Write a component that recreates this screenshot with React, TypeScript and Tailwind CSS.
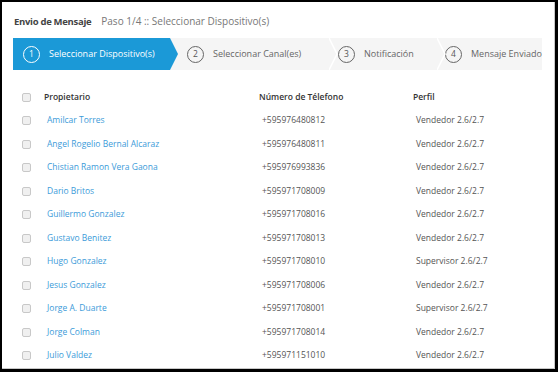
import React from "react";

const rows: [string, string, string][] = [
  ["Amilcar Torres", "+595976480812", "Vendedor 2.6/2.7"],
  ["Angel Rogelio Bernal Alcaraz", "+595976480811", "Vendedor 2.6/2.7"],
  ["Chistian Ramon Vera Gaona", "+595976993836", "Vendedor 2.6/2.7"],
  ["Dario Britos", "+595971708009", "Vendedor 2.6/2.7"],
  ["Guillermo Gonzalez", "+595971708016", "Vendedor 2.6/2.7"],
  ["Gustavo Benitez", "+595971708013", "Vendedor 2.6/2.7"],
  ["Hugo Gonzalez", "+595971708010", "Supervisor 2.6/2.7"],
  ["Jesus Gonzalez", "+595971708006", "Vendedor 2.6/2.7"],
  ["Jorge A. Duarte", "+595971708001", "Supervisor 2.6/2.7"],
  ["Jorge Colman", "+595971708014", "Vendedor 2.6/2.7"],
  ["Julio Valdez", "+595971151010", "Vendedor 2.6/2.7"],
];

function Check() {
  return <span className="block w-[9px] h-[9px] rounded-[2px] border border-[#c8c8c8] bg-[#f0f0f0]" />;
}

function Circle({ n, active }: { n: number; active?: boolean }) {
  return (
    <span
      className={
        "flex shrink-0 items-center justify-center w-[17px] h-[17px] rounded-full border-[1.5px] text-[8.5px] leading-none " +
        (active ? "border-white text-white" : "border-[#666] text-[#555]")
      }
    >
      {n}
    </span>
  );
}

function Chevron() {
  return (
    <svg className="absolute right-[-8px] top-0 z-10" width="9" height="32" viewBox="0 0 9 32">
      <polyline points="0,0 8,16 0,32" fill="none" stroke="#ffffff" strokeWidth="1.5" />
    </svg>
  );
}

export default function App() {
  return (
    <div className="w-[559px] h-[375px] bg-white" style={{ fontFamily: '"Open Sans", "Noto Sans", sans-serif' }}>
      <div className="w-[558px] h-[372px] border-l-2 border-t-2 border-r-4 border-b-[3px] border-black flex">
        <div className="flex-1 border-r border-b border-[#c8c8c8] flex flex-col">
          <div className="flex items-baseline pl-[12px] pt-[12px] h-[36px] whitespace-nowrap">
            <span className="text-[9.5px] font-bold tracking-[-0.3px] text-[#444]">Envio de Mensaje</span>
            <span className="ml-[10px] text-[10px] text-[#777]">Paso 1/4 :: Seleccionar Dispositivo(s)</span>
          </div>
          <div className="ml-[11px] mr-[12px] h-[32px] flex bg-[#f5f5f5] text-[9px] whitespace-nowrap">
            <div className="relative w-[157px] shrink-0 bg-[#1b99d7] flex items-center pl-[10px] gap-[9px] text-white">
              <Circle n={1} active />
              <span>Seleccionar Dispositivo(s)</span>
              <svg className="absolute right-[-8px] top-0 z-10" width="8" height="32" viewBox="0 0 8 32">
                <polygon points="0,0 8,16 0,32" fill="#1b99d7" />
              </svg>
            </div>
            <div className="relative w-[160px] shrink-0 flex items-center pl-[17px] gap-[9px] text-[#666]">
              <Circle n={2} />
              <span>Seleccionar Canal(es)</span>
              <Chevron />
            </div>
            <div className="relative w-[108px] shrink-0 flex items-center pl-[8px] gap-[9px] text-[#666]">
              <Circle n={3} />
              <span>Notificación</span>
              <Chevron />
            </div>
            <div className="flex-1 min-w-0 flex items-center pl-[7px] gap-[9px] text-[#666]">
              <Circle n={4} />
              <span>Mensaje Enviado</span>
            </div>
          </div>
          <div className="mt-[15px] text-[8.5px]">
            <div className="flex items-center h-[24px]">
              <div className="w-[42px] pl-[20px]"><Check /></div>
              <div className="w-[215px] font-semibold text-[#333]">Propietario</div>
              <div className="w-[154px] font-semibold text-[#333]">Número de Télefono</div>
              <div className="font-semibold text-[#333]">Perfil</div>
            </div>
            {rows.map(([n, p, r]) => (
              <div key={n} className="flex items-center h-[23.5px]">
                <div className="w-[42px] pl-[20px]"><Check /></div>
                <div className="w-[215px] pl-[3px] text-[#3c9bd9]">{n}</div>
                <div className="w-[154px] pl-[3px] text-[#555]">{p}</div>
                <div className="pl-[3px] text-[#555]">{r}</div>
              </div>
            ))}
          </div>
        </div>
      </div>
    </div>
  );
}
